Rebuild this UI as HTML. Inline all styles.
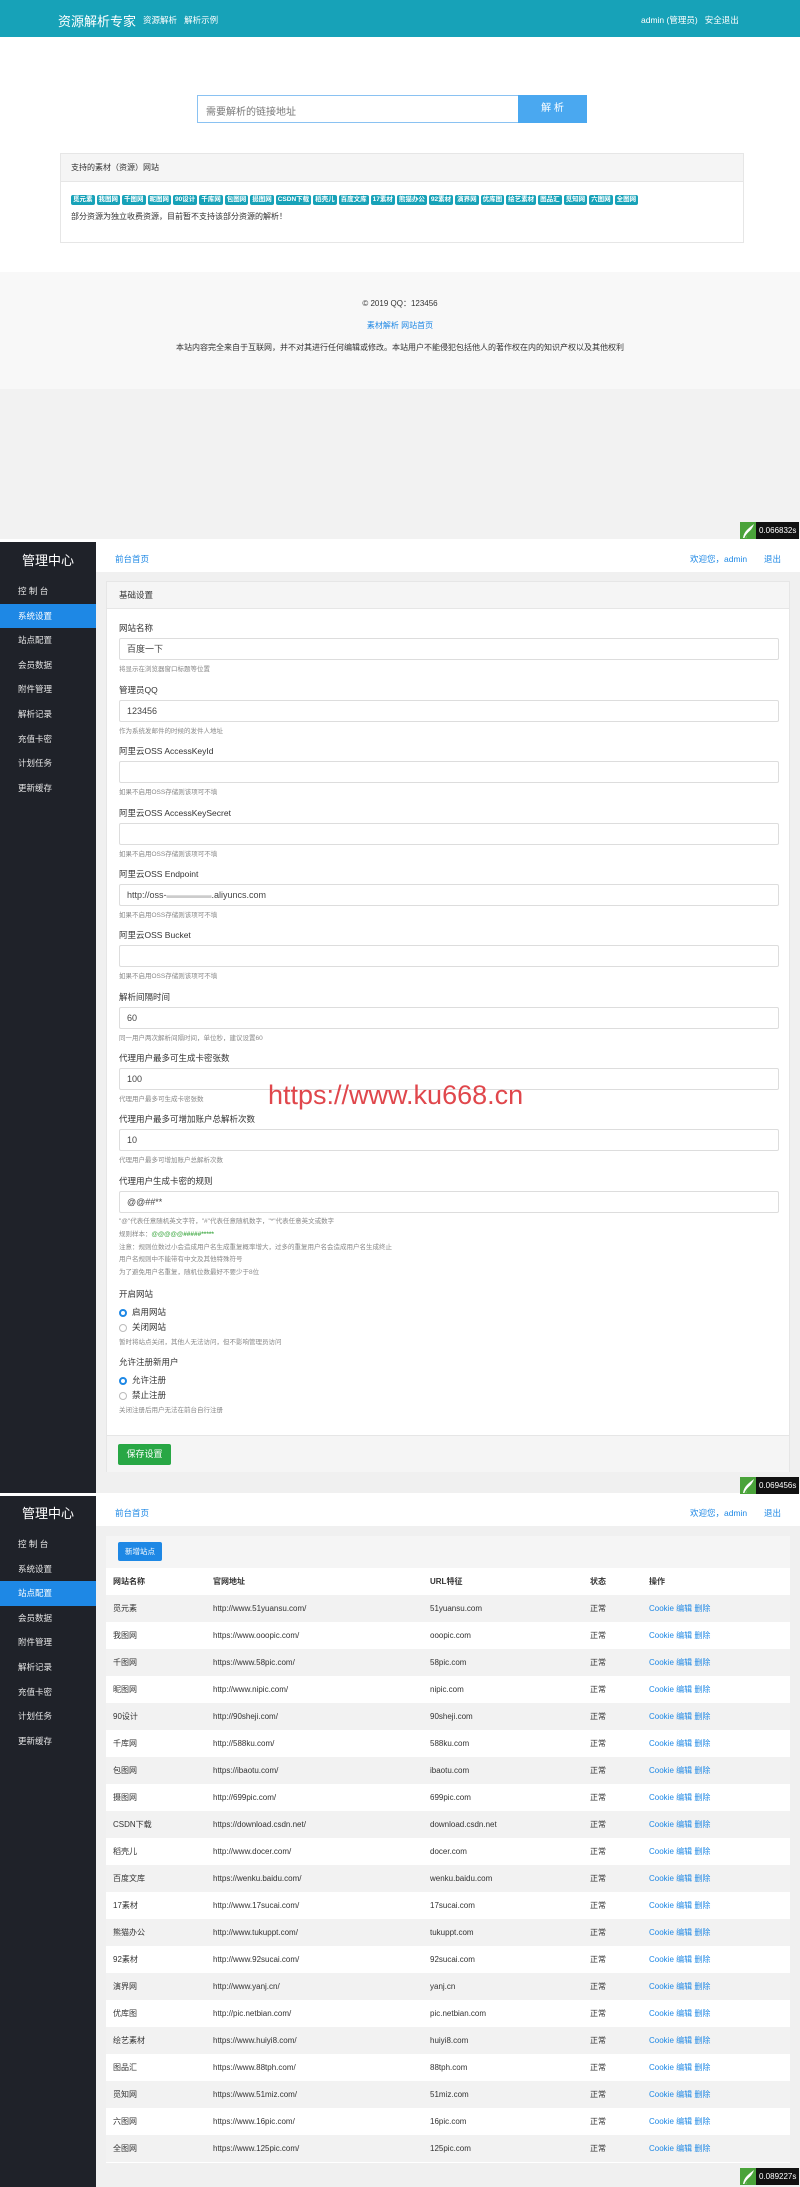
<!DOCTYPE html>
<html><head><meta charset="utf-8"><style>
*{margin:0;padding:0;box-sizing:border-box}
body{width:800px;height:2187px;overflow:hidden;font-family:"Liberation Sans","Noto Sans CJK SC",sans-serif;font-size:9px;color:#333;background:#fff;position:relative}
.a{position:absolute}
.hdr{left:0;top:0;width:800px;height:37px;background:#17a2b8;color:#fff}
.badge{display:inline-block;background:#17a2b8;color:#fff;font-size:6.5px;padding:1px 2px;border-radius:2px;margin-right:2px;font-weight:bold;line-height:8px}
.foot{left:0;top:272px;width:800px;height:117px;background:#f8f8f8;text-align:center}
.timer{height:17px;display:flex}
.timer .t{background:#111;color:#fff;font-size:8px;line-height:17px;padding:0 3px}
.side{left:0;width:96px;background:#1f2229;color:#e6e6e6}
.side .ttl{height:36px;line-height:36px;text-align:center;color:#fff;font-size:13px}
.side div.m{height:24.6px;line-height:24.6px;padding-left:18px;font-size:8.5px}
.side div.on{background:#1e88e5;color:#fff}
.main{left:96px;width:704px;background:#f0f0f0}
.top{height:30px;background:#fff;position:relative;font-size:8.5px;color:#1e88e5}
.card{position:absolute;left:10px;width:684px;background:#fff;border:1px solid #e6e6e6}
.ch{height:27px;background:#f5f5f5;border-bottom:1px solid #e6e6e6;padding-left:12px;line-height:27px;font-size:8.5px}
.f{position:absolute;left:12px;width:660px}
.f .l{font-size:8.5px;height:12px;line-height:12px}
.f .i{margin-top:4px;height:22px;border:1px solid #ddd;border-radius:2px;padding-left:7px;line-height:20px;font-size:9px;color:#444}
.f .h{font-size:6.5px;color:#888;margin-top:3px}
table{border-collapse:collapse;width:684px;font-size:8px}
td,th{height:27px;text-align:left;padding-left:7px}
th{font-weight:bold;background:#fff}
tr:nth-child(even) td{background:#f2f2f2}
tr:nth-child(odd) td{background:#fff}
.op{color:#1e88e5}
.rad{display:inline-block;width:8px;height:8px;border-radius:50%;border:1px solid #bbb;vertical-align:middle;margin-right:5px}
.rad.on{border:2.5px solid #1e88e5}
</style></head><body>

<div class="a hdr">
<div class="a" style="left:58px;top:11px;font-size:13px">资源解析专家</div>
<div class="a" style="left:143px;top:14px;font-size:8.5px">资源解析&nbsp;&nbsp;&nbsp;解析示例</div>
<div class="a" style="left:641px;top:14px;font-size:8.5px">admin (管理员)&nbsp;&nbsp;&nbsp;安全退出</div>
</div>

<div class="a" style="left:197px;top:95px;width:322px;height:28px;border:1.5px solid #8ac2f2;font-size:10px;color:#777;padding:7px 8px">需要解析的链接地址</div>
<div class="a" style="left:518px;top:95px;width:69px;height:28px;background:#4aa8f0;color:#fff;text-align:center;line-height:28px;font-size:10px">解 析</div>

<div class="a" style="left:60px;top:153px;width:684px;height:90px;border:1px solid #e6e6e6">
<div style="height:28px;background:#f5f5f5;border-bottom:1px solid #e6e6e6;padding-left:10px;line-height:28px;font-size:8px">支持的素材（资源）网站</div>
<div style="padding:11px 0 0 10px;white-space:nowrap"><span class="badge">觅元素</span><span class="badge">我图网</span><span class="badge">千图网</span><span class="badge">昵图网</span><span class="badge">90设计</span><span class="badge">千库网</span><span class="badge">包图网</span><span class="badge">摄图网</span><span class="badge">CSDN下载</span><span class="badge">稻壳儿</span><span class="badge">百度文库</span><span class="badge">17素材</span><span class="badge">熊猫办公</span><span class="badge">92素材</span><span class="badge">演界网</span><span class="badge">优库图</span><span class="badge">绘艺素材</span><span class="badge">图品汇</span><span class="badge">觅知网</span><span class="badge">六图网</span><span class="badge">全图网</span></div>
<div style="padding:6px 0 0 10px;font-size:8px">部分资源为独立收费资源，目前暂不支持该部分资源的解析！</div>
</div>

<div class="a foot">
<div class="a" style="top:26px;width:800px;font-size:8px">© 2019 QQ：123456</div>
<div class="a" style="top:48px;width:800px;font-size:8px;color:#1e88e5">素材解析 网站首页</div>
<div class="a" style="top:70px;width:800px;font-size:8px">本站内容完全来自于互联网，并不对其进行任何编辑或修改。本站用户不能侵犯包括他人的著作权在内的知识产权以及其他权利</div>
</div>
<div class="a" style="left:0;top:389px;width:800px;height:150px;background:#f2f2f2"></div>

<svg width="0" height="0" style="position:absolute"><defs><symbol id="leaf" viewBox="0 0 16 17"><rect width="16" height="17" fill="#4aa33a"/><path d="M3 16 C4 9 9 6 14 2 C12 8 8 10 6 16 Z" fill="#fff"/><path d="M5 16 C7 11 11 9 14 6" stroke="#4aa33a" stroke-width="1.3" fill="none"/></symbol></defs></svg>

<div class="a timer" style="left:740px;top:522px"><svg width="16" height="17"><use href="#leaf"/></svg><div class="t">0.066832s</div></div>

<!-- admin 1 -->
<div class="a side" style="top:542px;height:951px">
<div class="ttl" style="margin-top:1px">管理中心</div>
<div class="m">控 制 台</div><div class="m on">系统设置</div><div class="m">站点配置</div><div class="m">会员数据</div><div class="m">附件管理</div><div class="m">解析记录</div><div class="m">充值卡密</div><div class="m">计划任务</div><div class="m">更新缓存</div>
</div>
<div class="a main" style="top:542px;height:951px">
<div class="top"><span class="a" style="left:19px;top:11px">前台首页</span><span class="a" style="left:594px;top:11px">欢迎您，admin</span><span class="a" style="left:668px;top:11px">退出</span></div>
<div class="card" style="top:39px;height:891px">
<div class="ch">基础设置</div>
<div class="f" style="top:40px"><div class="l">网站名称</div><div class="i">百度一下</div><div class="h">将显示在浏览器窗口标题等位置</div></div>
<div class="f" style="top:102px"><div class="l">管理员QQ</div><div class="i">123456</div><div class="h">作为系统发邮件的时候的发件人地址</div></div>
<div class="f" style="top:163px"><div class="l">阿里云OSS AccessKeyId</div><div class="i"></div><div class="h">如果不启用OSS存储则该项可不填</div></div>
<div class="f" style="top:225px"><div class="l">阿里云OSS AccessKeySecret</div><div class="i"></div><div class="h">如果不启用OSS存储则该项可不填</div></div>
<div class="f" style="top:286px"><div class="l">阿里云OSS Endpoint</div><div class="i">http://oss-<span style="color:#ccc">▬▬▬▬▬</span>.aliyuncs.com</div><div class="h">如果不启用OSS存储则该项可不填</div></div>
<div class="f" style="top:347px"><div class="l">阿里云OSS Bucket</div><div class="i"></div><div class="h">如果不启用OSS存储则该项可不填</div></div>
<div class="f" style="top:409px"><div class="l">解析间隔时间</div><div class="i">60</div><div class="h">同一用户两次解析间隔时间，单位秒，建议设置60</div></div>
<div class="f" style="top:470px"><div class="l">代理用户最多可生成卡密张数</div><div class="i">100</div><div class="h">代理用户最多可生成卡密张数</div></div>
<div class="f" style="top:531px"><div class="l">代理用户最多可增加账户总解析次数</div><div class="i">10</div><div class="h">代理用户最多可增加账户总解析次数</div></div>
<div class="f" style="top:593px"><div class="l">代理用户生成卡密的规则</div><div class="i">@@##**</div>
<div class="h" style="line-height:12.8px">"@"代表任意随机英文字符，"#"代表任意随机数字，"*"代表任意英文或数字<br>规则样本：<span style="color:#4caf50;font-weight:bold">@@@@@#####*****</span><br>注意：规则位数过小会造成用户名生成重复概率增大，过多的重复用户名会造成用户名生成终止<br>用户名规则中不能带有中文及其他特殊符号<br>为了避免用户名重复，随机位数最好不要少于8位</div></div>
<div class="f" style="top:706px"><div class="l">开启网站</div>
<div style="font-size:8.5px;margin-top:6px"><span class="rad on"></span>启用网站</div><div style="font-size:8.5px;margin-top:3px"><span class="rad"></span>关闭网站</div><div class="h">暂时将站点关闭，其他人无法访问，但不影响管理员访问</div></div>
<div class="f" style="top:774px"><div class="l">允许注册新用户</div>
<div style="font-size:8.5px;margin-top:6px"><span class="rad on"></span>允许注册</div><div style="font-size:8.5px;margin-top:3px"><span class="rad"></span>禁止注册</div><div class="h">关闭注册后用户无法在前台自行注册</div></div>
<div class="a" style="left:0;top:853px;width:682px;height:37px;background:#f5f5f5;border-top:1px solid #e6e6e6"><div class="a" style="left:11px;top:8px;width:53px;height:21px;background:#28a745;color:#fff;border-radius:2px;text-align:center;line-height:21px;font-size:9px">保存设置</div></div>
</div>
<div class="a" style="left:172px;top:538px;font-size:27px;color:#e0474c;font-family:'Liberation Sans',sans-serif">https://www.ku668.cn</div>
</div>
<div class="a timer" style="left:740px;top:1477px"><svg width="16" height="17"><use href="#leaf"/></svg><div class="t">0.069456s</div></div>

<!-- admin 2 -->
<div class="a side" style="top:1496px;height:691px">
<div class="ttl">管理中心</div>
<div class="m">控 制 台</div><div class="m">系统设置</div><div class="m on">站点配置</div><div class="m">会员数据</div><div class="m">附件管理</div><div class="m">解析记录</div><div class="m">充值卡密</div><div class="m">计划任务</div><div class="m">更新缓存</div>
</div>
<div class="a main" style="top:1496px;height:691px">
<div class="top"><span class="a" style="left:19px;top:11px">前台首页</span><span class="a" style="left:594px;top:11px">欢迎您，admin</span><span class="a" style="left:668px;top:11px">退出</span></div>
<div class="card" style="top:40px;height:627px;border:none">
<div style="height:32px;background:#f5f5f5;position:relative"><div class="a" style="left:12px;top:6px;width:44px;height:19px;background:#1e88e5;color:#fff;border-radius:2px;text-align:center;line-height:19px;font-size:7.5px">新增站点</div></div>
<table>
<tr><th style="width:100px">网站名称</th><th style="width:217px">官网地址</th><th style="width:160px">URL特征</th><th style="width:59px">状态</th><th>操作</th></tr>
<tr><td>觅元素</td><td>http://www.51yuansu.com/</td><td>51yuansu.com</td><td>正常</td><td class="op">Cookie 编辑 删除</td></tr>
<tr><td>我图网</td><td>https://www.ooopic.com/</td><td>ooopic.com</td><td>正常</td><td class="op">Cookie 编辑 删除</td></tr>
<tr><td>千图网</td><td>https://www.58pic.com/</td><td>58pic.com</td><td>正常</td><td class="op">Cookie 编辑 删除</td></tr>
<tr><td>昵图网</td><td>http://www.nipic.com/</td><td>nipic.com</td><td>正常</td><td class="op">Cookie 编辑 删除</td></tr>
<tr><td>90设计</td><td>http://90sheji.com/</td><td>90sheji.com</td><td>正常</td><td class="op">Cookie 编辑 删除</td></tr>
<tr><td>千库网</td><td>http://588ku.com/</td><td>588ku.com</td><td>正常</td><td class="op">Cookie 编辑 删除</td></tr>
<tr><td>包图网</td><td>https://ibaotu.com/</td><td>ibaotu.com</td><td>正常</td><td class="op">Cookie 编辑 删除</td></tr>
<tr><td>摄图网</td><td>http://699pic.com/</td><td>699pic.com</td><td>正常</td><td class="op">Cookie 编辑 删除</td></tr>
<tr><td>CSDN下载</td><td>https://download.csdn.net/</td><td>download.csdn.net</td><td>正常</td><td class="op">Cookie 编辑 删除</td></tr>
<tr><td>稻壳儿</td><td>http://www.docer.com/</td><td>docer.com</td><td>正常</td><td class="op">Cookie 编辑 删除</td></tr>
<tr><td>百度文库</td><td>https://wenku.baidu.com/</td><td>wenku.baidu.com</td><td>正常</td><td class="op">Cookie 编辑 删除</td></tr>
<tr><td>17素材</td><td>http://www.17sucai.com/</td><td>17sucai.com</td><td>正常</td><td class="op">Cookie 编辑 删除</td></tr>
<tr><td>熊猫办公</td><td>http://www.tukuppt.com/</td><td>tukuppt.com</td><td>正常</td><td class="op">Cookie 编辑 删除</td></tr>
<tr><td>92素材</td><td>http://www.92sucai.com/</td><td>92sucai.com</td><td>正常</td><td class="op">Cookie 编辑 删除</td></tr>
<tr><td>演界网</td><td>http://www.yanj.cn/</td><td>yanj.cn</td><td>正常</td><td class="op">Cookie 编辑 删除</td></tr>
<tr><td>优库图</td><td>http://pic.netbian.com/</td><td>pic.netbian.com</td><td>正常</td><td class="op">Cookie 编辑 删除</td></tr>
<tr><td>绘艺素材</td><td>https://www.huiyi8.com/</td><td>huiyi8.com</td><td>正常</td><td class="op">Cookie 编辑 删除</td></tr>
<tr><td>图品汇</td><td>https://www.88tph.com/</td><td>88tph.com</td><td>正常</td><td class="op">Cookie 编辑 删除</td></tr>
<tr><td>觅知网</td><td>https://www.51miz.com/</td><td>51miz.com</td><td>正常</td><td class="op">Cookie 编辑 删除</td></tr>
<tr><td>六图网</td><td>https://www.16pic.com/</td><td>16pic.com</td><td>正常</td><td class="op">Cookie 编辑 删除</td></tr>
<tr><td>全图网</td><td>https://www.125pic.com/</td><td>125pic.com</td><td>正常</td><td class="op">Cookie 编辑 删除</td></tr>
</table>
</div>
</div>
<div class="a timer" style="left:740px;top:2168px"><svg width="16" height="17"><use href="#leaf"/></svg><div class="t">0.089227s</div></div>
</body></html>
